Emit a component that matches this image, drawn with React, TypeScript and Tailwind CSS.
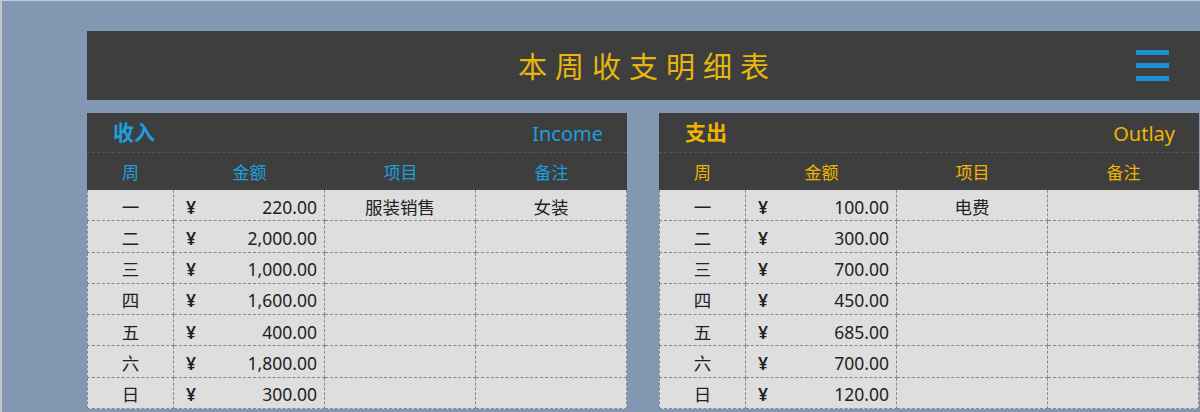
import React from "react"

type Row = { day: string; amount: string; item?: string; note?: string }

const INCOME: Row[] = [
  { day: "一", amount: "220.00", item: "服装销售", note: "女装" },
  { day: "二", amount: "2,000.00" },
  { day: "三", amount: "1,000.00" },
  { day: "四", amount: "1,600.00" },
  { day: "五", amount: "400.00" },
  { day: "六", amount: "1,800.00" },
  { day: "日", amount: "300.00" },
]

const OUTLAY: Row[] = [
  { day: "一", amount: "100.00", item: "电费" },
  { day: "二", amount: "300.00" },
  { day: "三", amount: "700.00" },
  { day: "四", amount: "450.00" },
  { day: "五", amount: "685.00" },
  { day: "六", amount: "700.00" },
  { day: "日", amount: "120.00" },
]

const FONT = { fontFamily: '"Noto Sans", "Noto Sans CJK SC", sans-serif' }

function Panel({
  title,
  subtitle,
  rows,
  accent,
}: {
  title: string
  subtitle: string
  rows: Row[]
  accent: "blue" | "yellow"
}) {
  const color = accent === "blue" ? "text-[#1c9fdc]" : "text-[#f0b400]"
  const cell = "border-r border-b border-dashed border-[#888] h-[31.3px] flex items-center pt-[3px]"

  return (
    <div className="w-[540px] shrink-0">
      <div className="bg-[#3e3e3e]">
        <div className="h-[40px] flex items-center justify-between pl-[26px] pr-[24px] border-b border-dashed border-[#575757]">
          <span className={`text-[21px] font-bold leading-none ${color}`}>{title}</span>
          <span className={`text-[20px] leading-none pt-[2px] ${color}`}>{subtitle}</span>
        </div>
        <div className={`grid grid-cols-[87px_151px_151px_151px] h-[37px] items-center text-[17px] pt-[2px] ${color}`}>
          <span className="text-center">周</span>
          <span className="text-center">金额</span>
          <span className="text-center">项目</span>
          <span className="text-center">备注</span>
        </div>
      </div>
      <div className="grid grid-cols-[87px_151px_151px_151px] bg-[#dedede] text-[17.5px] text-[#222]">
        {rows.map((r) => (
          <React.Fragment key={r.day}>
            <div className={`${cell} border-l justify-center`}>{r.day}</div>
            <div className={`${cell} justify-between pl-[12px] pr-[7px]`}>
              <span className="font-semibold">¥</span>
              <span>{r.amount}</span>
            </div>
            <div className={`${cell} justify-center`}>{r.item ?? ""}</div>
            <div className={`${cell} justify-center`}>{r.note ?? ""}</div>
          </React.Fragment>
        ))}
      </div>
    </div>
  )
}

export default function App() {
  return (
    <div
      className="w-[1200px] h-[412px] overflow-hidden bg-[#8297b1] border-t border-l-2 border-[#c4c8cc] pt-[30px] pl-[85px]"
      style={FONT}
    >
      <div className="h-[69px] bg-[#3e3e3e] grid grid-cols-[1fr_auto_1fr] items-center">
        <div />
        <h1 className="text-[29px] leading-none text-[#e8b70a] tracking-[8px] pl-[8px] pt-[2px]">本周收支明细表</h1>
        <div className="flex justify-end pr-[31px]">
          <div className="flex flex-col gap-[8px]">
            <span className="block w-[33px] h-[5px] bg-[#1a90d6]" />
            <span className="block w-[33px] h-[5px] bg-[#1a90d6]" />
            <span className="block w-[33px] h-[5px] bg-[#1a90d6]" />
          </div>
        </div>
      </div>
      <div className="flex gap-[32px] mt-[13px]">
        <Panel title="收入" subtitle="Income" rows={INCOME} accent="blue" />
        <Panel title="支出" subtitle="Outlay" rows={OUTLAY} accent="yellow" />
      </div>
    </div>
  )
}
